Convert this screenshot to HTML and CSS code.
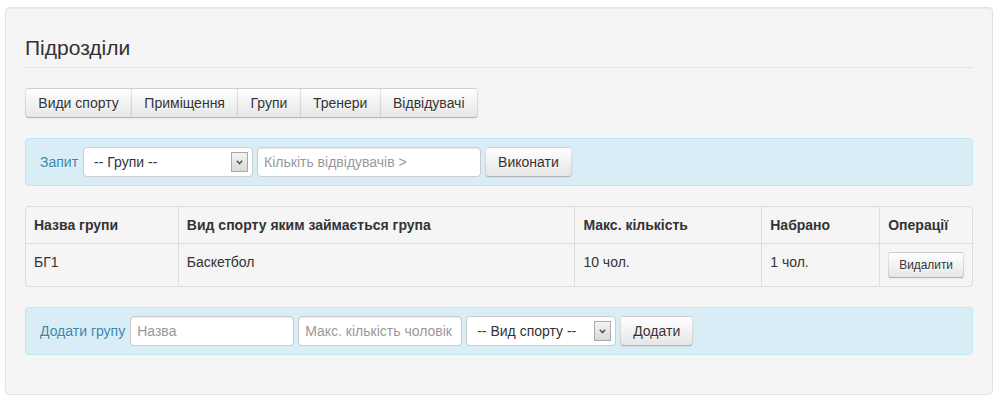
FILE: index.html
```html
<!DOCTYPE html>
<html lang="uk">
<head>
<meta charset="utf-8">
<title>Підрозділи</title>
<link rel="stylesheet" href="styles.css">
</head>
<body>
<div class="well">
  <div class="legend">Підрозділи</div>

  <div class="btn-group">
    <button class="btn">Види спорту</button>
    <button class="btn">Приміщення</button>
    <button class="btn">Групи</button>
    <button class="btn">Тренери</button>
    <button class="btn">Відвідувачі</button>
  </div>

  <form class="alert form-inline">
    <label class="lbl">Запит</label>
    <span class="select-wrap sel-query">
      <select class="select"><option>-- Групи --</option></select>
      <span class="arrow"><svg width="7" height="5" viewBox="0 0 7 5"><path d="M0.8 0.8 L3.5 3.6 L6.2 0.8" fill="none" stroke="#555" stroke-width="1.5"/></svg></span>
    </span>
    <input class="input input-q" type="text" placeholder="Кількіть відвідувачів &gt;">
    <button class="btn" type="button">Виконати</button>
  </form>

  <table class="table">
    <thead>
      <tr>
        <th class="c1">Назва групи</th>
        <th class="c2">Вид спорту яким займається група</th>
        <th class="c3">Макс. кількість</th>
        <th class="c4">Набрано</th>
        <th class="c5">Операції</th>
      </tr>
    </thead>
    <tbody>
      <tr>
        <td>БГ1</td>
        <td>Баскетбол</td>
        <td>10 чол.</td>
        <td>1 чол.</td>
        <td><button class="btn btn-small">Видалити</button></td>
      </tr>
    </tbody>
  </table>

  <form class="alert form-inline">
    <label class="lbl">Додати групу</label>
    <input class="input input-medium" type="text" placeholder="Назва">
    <input class="input input-medium" type="text" placeholder="Макс. кількість чоловік">
    <span class="select-wrap sel-sport">
      <select class="select"><option>-- Вид спорту --</option></select>
      <span class="arrow"><svg width="7" height="5" viewBox="0 0 7 5"><path d="M0.8 0.8 L3.5 3.6 L6.2 0.8" fill="none" stroke="#555" stroke-width="1.5"/></svg></span>
    </span>
    <button class="btn" type="button">Додати</button>
  </form>
</div>
</body>
</html>
```
FILE: styles.css
```css
* { box-sizing: border-box; }
html, body { margin: 0; padding: 0; background: #fff; }
body {
  font-family: "Liberation Sans", Arial, Helvetica, sans-serif;
  font-size: 14px;
  line-height: 20px;
  color: #333;
}
.well {
  margin: 7px 5px 5px 5px;
  padding: 19px;
  background: #f5f5f5;
  border: 1px solid #e3e3e3;
  border-radius: 4px;
  box-shadow: inset 0 1px 1px rgba(0,0,0,0.05);
}
.legend {
  font-size: 21px;
  line-height: 40px;
  padding-top: 1px;
  color: #333;
  border-bottom: 1px solid #e5e5e5;
  margin-bottom: 20px;
  height: 41px;
}
.btn-group {
  display: flex;
  margin-bottom: 20px;
}
.btn {
  font-family: inherit;
  font-size: 14px;
  line-height: 20px;
  height: 30px;
  padding: 4px 12px;
  color: #333;
  text-shadow: 0 1px 1px rgba(255,255,255,0.75);
  background-color: #f5f5f5;
  background-image: linear-gradient(to bottom, #ffffff, #e6e6e6);
  border: 1px solid #cccccc;
  border-color: rgba(0,0,0,0.1) rgba(0,0,0,0.1) rgba(0,0,0,0.25);
  border-bottom-color: #b3b3b3;
  border-radius: 4px;
  box-shadow: inset 0 1px 0 rgba(255,255,255,0.2), 0 1px 2px rgba(0,0,0,0.05);
  cursor: pointer;
  white-space: nowrap;
}
.btn-group .btn { border-radius: 0; padding: 4px 12.3px; }
.btn-group .btn + .btn { margin-left: -1px; }
.btn-group .btn:first-child { border-radius: 4px 0 0 4px; }
.btn-group .btn:last-child { border-radius: 0 4px 4px 0; }
.btn-small {
  font-size: 11.9px;
  height: 26px;
  padding: 2px 10px;
  border-radius: 3px;
}
.alert {
  margin: 0 0 20px 0;
  padding: 8px 35px 8px 14px;
  background: #d9edf7;
  border: 1px solid #bce8f1;
  border-radius: 4px;
  color: #3a87ad;
  text-shadow: 0 1px 0 rgba(255,255,255,0.5);
}
.form-inline {
  display: flex;
  align-items: center;
  gap: 4px;
}
.lbl { white-space: nowrap; padding-right: 1px; }
.input {
  font-family: inherit;
  font-size: 14px;
  line-height: 20px;
  height: 30px;
  padding: 4px 6px;
  color: #555;
  background: #fff;
  border: 1px solid #ccc;
  border-radius: 4px;
  box-shadow: inset 0 1px 1px rgba(0,0,0,0.075);
  outline: none;
}
.input::placeholder { color: #999; }
.input-q { width: 224px; }
.input-medium { width: 164px; }
.select-wrap {
  position: relative;
  display: block;
  height: 30px;
}
.sel-query { width: 170px; }
.sel-sport { width: 150px; }
.select {
  -webkit-appearance: none;
  appearance: none;
  width: 100%;
  height: 30px;
  font-family: inherit;
  font-size: 14px;
  color: #333;
  padding: 0 24px 0 10px;
  background: #fff;
  border: 1px solid #ccc;
  border-radius: 4px;
  outline: none;
}
.arrow {
  position: absolute;
  right: 5px;
  top: 5px;
  width: 17px;
  height: 20px;
  border: 1px solid #a9a9a9;
  background: linear-gradient(to bottom, #f3f3f3, #dadada);
  display: flex;
  align-items: center;
  justify-content: center;
  pointer-events: none;
}
.table {
  width: 100%;
  margin-bottom: 20px;
  border: 1px solid #ddd;
  border-left: 0;
  border-collapse: separate;
  border-spacing: 0;
  border-radius: 4px;
}
.table th, .table td {
  padding: 8px;
  line-height: 20px;
  text-align: left;
  vertical-align: top;
  border-left: 1px solid #ddd;
}
.table th { font-weight: bold; }
.table td { border-top: 1px solid #ddd; }
.table .c1 { width: 153px; }
.table .c2 { width: 397px; }
.table .c3 { width: 187px; }
.table .c4 { width: 118px; }
.table thead tr:first-child th:first-child { border-top-left-radius: 4px; }
.table tbody tr:last-child td:first-child { border-bottom-left-radius: 4px; }
```
